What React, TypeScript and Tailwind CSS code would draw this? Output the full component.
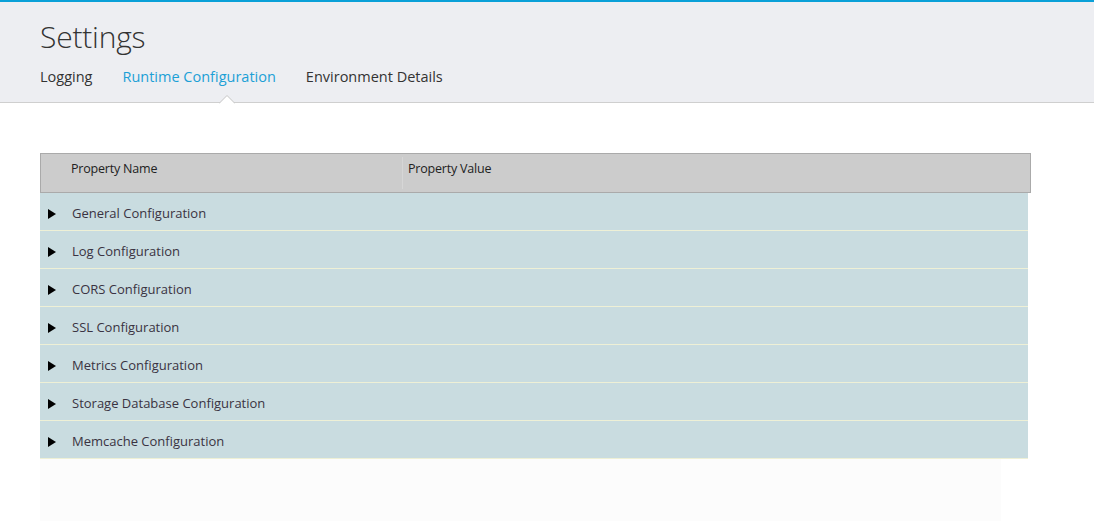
import { useState } from 'react';

const sections = [
  'General Configuration',
  'Log Configuration',
  'CORS Configuration',
  'SSL Configuration',
  'Metrics Configuration',
  'Storage Database Configuration',
  'Memcache Configuration',
];

const tabs = ['Logging', 'Runtime Configuration', 'Environment Details'];

function Caret() {
  return (
    <svg width="16" height="9" viewBox="0 0 16 9" className="absolute -bottom-px left-[97px]">
      <path d="M0 8.5 L8 0.5 L16 8.5" fill="#ffffff" stroke="#c4c4c4" strokeWidth="1" />
    </svg>
  );
}

export default function App() {
  const [active, setActive] = useState(1);

  return (
    <div className="min-h-[521px] bg-white font-['Open_Sans',sans-serif] text-[#333]">
      <header className="border-t-2 border-b border-t-[#0aa0d8] border-b-[#cfcfcf] bg-[#edeef2] px-10">
        <h1 className="pt-[15px] text-[30px] leading-[40px] font-light tracking-[-0.2px] text-[#333]">
          Settings
        </h1>
        <nav className="mt-[10px] flex gap-[30px] pb-[15px]">
          {tabs.map((tab, i) => (
            <button
              key={tab}
              type="button"
              onClick={() => setActive(i)}
              className={
                'relative text-[14.5px] leading-[20px] ' +
                (i === active ? 'text-[#1ca0d6]' : 'text-[#333]')
              }
            >
              {tab}
              {i === active ? (
                <span className="absolute left-0 right-0 top-[20px] h-[16px]">
                  <Caret />
                </span>
              ) : null}
            </button>
          ))}
        </nav>
      </header>

      <div className="px-10 pt-[50px]">
        <div className="w-[991px] border border-[#aaaaaa] bg-[#cccccc]">
          <div className="flex h-[38px] items-center pb-[7px] text-[12.5px] tracking-[-0.2px] text-[#222]">
            <div className="w-[361px] pl-[30px]">Property Name</div>
            <div className="mt-[6px] h-[32px] w-px bg-[#d6d6d6]" />
            <div className="pl-[5px]">Property Value</div>
          </div>
        </div>

        <div className="w-[988px]">
          {sections.map((name) => (
            <div
              key={name}
              className="flex h-[38px] items-center border-b border-[#eef0d6] bg-[#c9dce0] pt-[5px] text-[13px] text-[#3a3342]"
            >
              <svg width="8" height="10" viewBox="0 0 8 10" className="ml-[8px]">
                <path d="M0 0 L8 5 L0 10 Z" fill="#000" />
              </svg>
              <span className="ml-[16px]">{name}</span>
            </div>
          ))}
        </div>
        <div className="h-[62px] w-[961px] bg-[#fcfcfc]" />
      </div>
    </div>
  );
}
